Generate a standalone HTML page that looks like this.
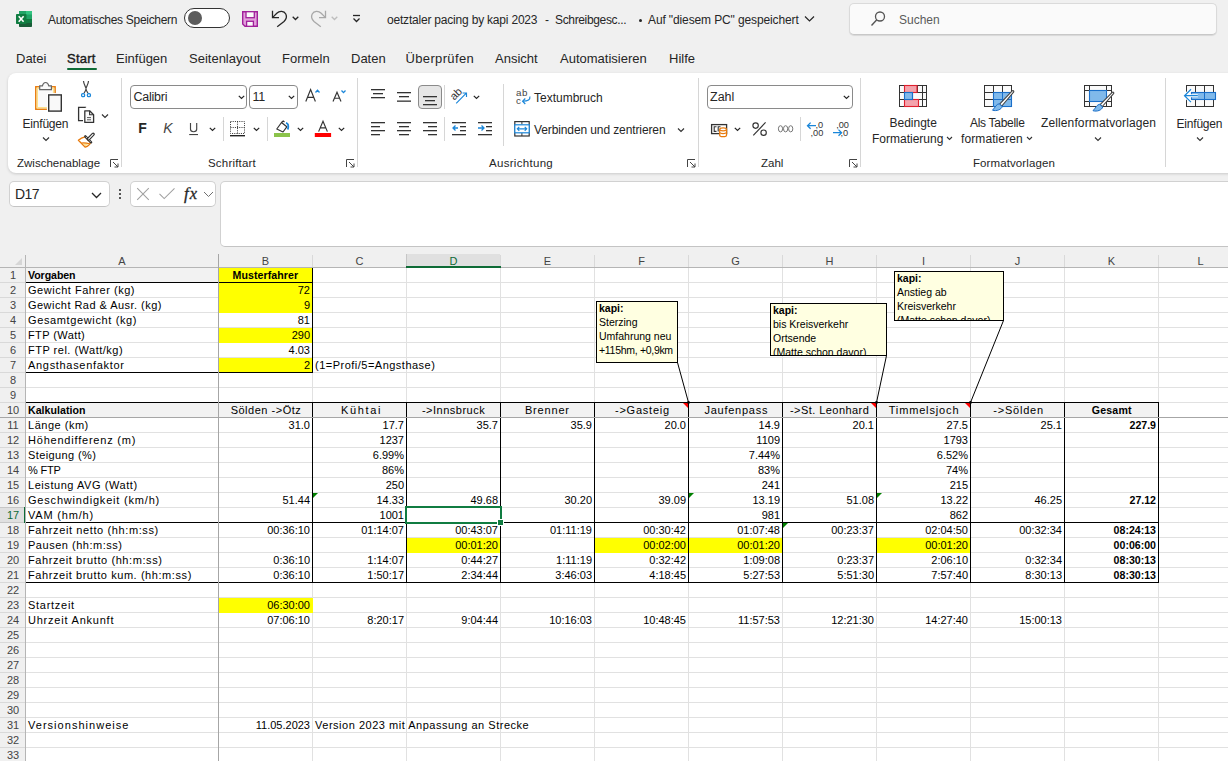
<!DOCTYPE html>
<html><head><meta charset="utf-8"><style>
html,body{margin:0;padding:0;width:1228px;height:761px;overflow:hidden;background:#f0f0f0}
body{position:relative;font-family:"Liberation Sans",sans-serif}
.r{position:absolute;box-sizing:border-box}
svg.r{box-sizing:content-box;overflow:visible}
.t{position:absolute;white-space:nowrap;line-height:1.117;font-family:"Liberation Sans",sans-serif}
.cm{background:#ffffe1;border:1px solid #000;overflow:hidden;font-size:10.5px;line-height:14px;padding:0 0 0 2px;color:#000;white-space:nowrap;letter-spacing:0}
.cm b{font-weight:bold}
</style></head><body>
<div class="r" style="left:0px;top:0px;width:1228px;height:761px;background:#f0f0f0;"></div>
<svg class="r" style="left:16px;top:11px;" width="17" height="17" viewBox="0 0 17 17">
<rect x="3" y="0" width="13" height="16" rx="0.8" fill="#185c37"/>
<rect x="3" y="0" width="13" height="12" fill="#107c41"/>
<rect x="3" y="0" width="13" height="8" fill="#21a366"/>
<rect x="10" y="0" width="6" height="3.5" fill="#33c481"/>
<rect x="0" y="3" width="10.5" height="10" rx="0.8" fill="#107c41"/>
<path d="M2.7 5.3 L7.6 10.8 M7.6 5.3 L2.7 10.8" stroke="#fff" stroke-width="1.6"/>
</svg>
<div class="t" style="left:48px;top:14px;font-size:12px;color:#262626;font-weight:normal;letter-spacing:-0.3px;">Automatisches Speichern</div>
<div class="r" style="left:184px;top:8px;width:46px;height:20px;border:1.3px solid #333;border-radius:10px;background:#fff"></div>
<div class="r" style="left:188.2px;top:11.2px;width:13.6px;height:13.6px;border-radius:7px;background:#5c5c5c"></div>
<svg class="r" style="left:242px;top:11px;" width="16" height="16" viewBox="0 0 16 16">
<path d="M0.7 0.7 H15.3 V15.3 H3 L0.7 13 Z" fill="#e2a0dc" stroke="#a0209a" stroke-width="1.4"/>
<rect x="4" y="0.7" width="8.3" height="6" fill="#fafafa" stroke="#a0209a" stroke-width="1.3"/>
<rect x="4.6" y="10.3" width="6.8" height="5" fill="#fafafa" stroke="#a0209a" stroke-width="1.3"/>
</svg>
<svg class="r" style="left:270px;top:9px;" width="20" height="20" viewBox="0 0 20 20">
<path d="M2.5 1.8 V8.6 H9" fill="none" stroke="#262626" stroke-width="1.3"/>
<path d="M2.5 8.6 L6.8 4.3 C9.5 1.6 14 1.8 15.8 5 C17 7.5 16.5 10 14 12.5 L7.2 17.7" fill="none" stroke="#262626" stroke-width="1.3"/>
</svg>
<svg class="r" style="left:292px;top:16px;" width="8" height="5" viewBox="0 0 8 5"><path d="M0.7 0.7 L3.5 3.5 L6.3 0.7" fill="none" stroke="#262626" stroke-width="1.3"/></svg>
<svg class="r" style="left:309px;top:9px;" width="20" height="20" viewBox="0 0 20 20">
<path d="M16.5 1.8 V8.6 H10" fill="none" stroke="#a8a8a8" stroke-width="1.3"/>
<path d="M16.5 8.6 L12.2 4.3 C9.5 1.6 5 1.8 3.2 5 C2 7.5 2.5 10 5 12.5 L11.8 17.7" fill="none" stroke="#a8a8a8" stroke-width="1.3"/>
</svg>
<svg class="r" style="left:331px;top:16px;" width="8" height="5" viewBox="0 0 8 5"><path d="M0.7 0.7 L3.5 3.5 L6.3 0.7" fill="none" stroke="#bdbdbd" stroke-width="1.3"/></svg>
<svg class="r" style="left:352px;top:14px;" width="10" height="10" viewBox="0 0 10 10"><path d="M1 1.5 H8" stroke="#262626" stroke-width="1.3"/><path d="M1.5 4.5 L4.5 7.5 L7.5 4.5" fill="none" stroke="#262626" stroke-width="1.3"/></svg>
<div class="t" style="left:387px;top:14px;font-size:12px;color:#262626;font-weight:normal;letter-spacing:-0.2px;">oetztaler pacing by kapi 2023</div>
<div class="t" style="left:545px;top:14px;font-size:12px;color:#262626;font-weight:normal;letter-spacing:0px;">-</div>
<div class="t" style="left:555px;top:14px;font-size:12px;color:#262626;font-weight:normal;letter-spacing:-0.35px;">Schreibgesc...</div>
<div class="r" style="left:639px;top:19px;width:3px;height:3px;background:#262626;border-radius:2px"></div>
<div class="t" style="left:648px;top:14px;font-size:12px;color:#262626;font-weight:normal;letter-spacing:-0.12px;">Auf "diesem PC" gespeichert</div>
<svg class="r" style="left:804px;top:15px;" width="11" height="8" viewBox="0 0 11 8"><path d="M1 1.5 L5.5 6 L10 1.5" fill="none" stroke="#262626" stroke-width="1.2"/></svg>
<div class="r" style="left:849px;top:3px;width:368px;height:32px;border:1px solid #dadada;border-bottom-color:#c8c8c8;border-radius:5px;background:#fafafa;box-shadow:0 1px 1px rgba(0,0,0,0.1)"></div>
<svg class="r" style="left:870px;top:10px;" width="16" height="17" viewBox="0 0 16 17"><circle cx="10" cy="6.5" r="4.5" fill="none" stroke="#555" stroke-width="1.3"/><path d="M6.8 9.8 L1.5 15.5" stroke="#555" stroke-width="1.4"/></svg>
<div class="t" style="left:899px;top:14px;font-size:12px;color:#5a5a5a;font-weight:normal;letter-spacing:0px;">Suchen</div>
<div class="t" style="left:16px;top:52px;font-size:13px;color:#262626;font-weight:normal;letter-spacing:0px;">Datei</div>
<div class="t" style="left:67px;top:52px;font-size:13px;color:#1a1a1a;font-weight:normal;letter-spacing:0.25px;-webkit-text-stroke:0.4px #1a1a1a">Start</div>
<div class="t" style="left:116px;top:52px;font-size:13px;color:#262626;font-weight:normal;letter-spacing:0px;">Einfügen</div>
<div class="t" style="left:189px;top:52px;font-size:13px;color:#262626;font-weight:normal;letter-spacing:0px;">Seitenlayout</div>
<div class="t" style="left:282px;top:52px;font-size:13px;color:#262626;font-weight:normal;letter-spacing:0px;">Formeln</div>
<div class="t" style="left:351px;top:52px;font-size:13px;color:#262626;font-weight:normal;letter-spacing:0px;">Daten</div>
<div class="t" style="left:405.5px;top:52px;font-size:13px;color:#262626;font-weight:normal;letter-spacing:0.35px;">Überprüfen</div>
<div class="t" style="left:495px;top:52px;font-size:13px;color:#262626;font-weight:normal;letter-spacing:0px;">Ansicht</div>
<div class="t" style="left:560px;top:52px;font-size:13px;color:#262626;font-weight:normal;letter-spacing:0px;">Automatisieren</div>
<div class="t" style="left:669px;top:52px;font-size:13px;color:#262626;font-weight:normal;letter-spacing:0px;">Hilfe</div>
<div class="r" style="left:67px;top:68px;width:30px;height:2px;background:#0e6b36;border-radius:1px"></div>
<div class="r" style="left:8px;top:73px;width:1240px;height:100px;background:#fff;border-radius:8px;box-shadow:0 1px 3px rgba(0,0,0,0.16)"></div>
<div class="r" style="left:121px;top:78px;width:1px;height:89px;background:#d6d6d6;"></div>
<div class="r" style="left:357px;top:78px;width:1px;height:89px;background:#d6d6d6;"></div>
<div class="r" style="left:698px;top:78px;width:1px;height:89px;background:#d6d6d6;"></div>
<div class="r" style="left:860px;top:78px;width:1px;height:89px;background:#d6d6d6;"></div>
<div class="r" style="left:1165px;top:78px;width:1px;height:89px;background:#d6d6d6;"></div>
<div class="t" style="left:17px;top:157px;font-size:11.5px;color:#262626;font-weight:normal;letter-spacing:0px;">Zwischenablage</div>
<div class="t" style="left:208px;top:157px;font-size:11.5px;color:#262626;font-weight:normal;letter-spacing:0.2px;">Schriftart</div>
<div class="t" style="left:489px;top:157px;font-size:11.5px;color:#262626;font-weight:normal;letter-spacing:0.3px;">Ausrichtung</div>
<div class="t" style="left:761px;top:157px;font-size:11.5px;color:#262626;font-weight:normal;letter-spacing:0px;">Zahl</div>
<div class="t" style="left:973px;top:157px;font-size:11.5px;color:#262626;font-weight:normal;letter-spacing:0.1px;">Formatvorlagen</div>
<svg class="r" style="left:110px;top:159px;" width="9" height="9" viewBox="0 0 9 9"><path d="M0.5 8 V0.5 H8" fill="none" stroke="#444" stroke-width="1"/><path d="M3 3 L8 8 M4.5 8 H8 V4.5" fill="none" stroke="#444" stroke-width="1"/></svg>
<svg class="r" style="left:346px;top:159px;" width="9" height="9" viewBox="0 0 9 9"><path d="M0.5 8 V0.5 H8" fill="none" stroke="#444" stroke-width="1"/><path d="M3 3 L8 8 M4.5 8 H8 V4.5" fill="none" stroke="#444" stroke-width="1"/></svg>
<svg class="r" style="left:687px;top:159px;" width="9" height="9" viewBox="0 0 9 9"><path d="M0.5 8 V0.5 H8" fill="none" stroke="#444" stroke-width="1"/><path d="M3 3 L8 8 M4.5 8 H8 V4.5" fill="none" stroke="#444" stroke-width="1"/></svg>
<svg class="r" style="left:849px;top:159px;" width="9" height="9" viewBox="0 0 9 9"><path d="M0.5 8 V0.5 H8" fill="none" stroke="#444" stroke-width="1"/><path d="M3 3 L8 8 M4.5 8 H8 V4.5" fill="none" stroke="#444" stroke-width="1"/></svg>
<svg class="r" style="left:34px;top:80px;" width="30" height="33" viewBox="0 0 30 33">
<rect x="1.8" y="6.8" width="19.3" height="22.4" fill="#f9f9f9" stroke="#e8790a" stroke-width="1.5"/>
<rect x="3.3" y="8.3" width="16.3" height="19.4" fill="none" stroke="#fde08a" stroke-width="1.4"/>
<path d="M5.7 9.6 V5.9 H8.4 C8.9 3.6 10 2.5 11.6 2.5 C13.2 2.5 14.3 3.6 14.8 5.9 H17.4 V9.6 Z" fill="#fafafa" stroke="#666" stroke-width="1.2"/>
<rect x="14.7" y="14.9" width="12.6" height="16.2" fill="#f9f9f9" stroke="#fff" stroke-width="3.6"/>
<rect x="14.7" y="14.9" width="12.6" height="16.2" fill="#f9f9f9" stroke="#333" stroke-width="1.4"/>
</svg>
<div class="t" style="left:22.5px;top:118px;font-size:12px;color:#262626;font-weight:normal;letter-spacing:-0.2px;">Einfügen</div>
<svg class="r" style="left:42px;top:136px;" width="8" height="6" viewBox="0 0 8 6"><path d="M1 1.5 L4 4.5 L7 1.5" fill="none" stroke="#333" stroke-width="1.2"/></svg>
<svg class="r" style="left:80px;top:81px;" width="12" height="17" viewBox="0 0 12 17">
<path d="M3.5 0 C3.6 3 5.4 5 6.3 8.2 L4 12.3 M8.5 0 C8.4 3 6.6 5 5.7 8.2 L8 12.3" fill="none" stroke="#444" stroke-width="1.2"/>
<rect x="1.6" y="12.6" width="3" height="3" rx="1.2" fill="#fff" stroke="#1a86d9" stroke-width="1.3"/>
<rect x="7.4" y="12.6" width="3" height="3" rx="1.2" fill="#fff" stroke="#1a86d9" stroke-width="1.3"/>
</svg>
<svg class="r" style="left:77px;top:106px;" width="19" height="18" viewBox="0 0 19 18">
<path d="M8.5 1.6 V1.3 H1.6 V14.6 H6" fill="none" stroke="#333" stroke-width="1.3"/>
<path d="M7.8 4.8 H12.6 L16.6 8.8 V16.4 H7.8 Z" fill="#fafafa" stroke="#333" stroke-width="1.3" stroke-linejoin="round"/>
<path d="M12.6 4.8 V8.8 H16.6" fill="none" stroke="#333" stroke-width="1.1"/>
<path d="M10 11.6 H14 M10 13.8 H14" stroke="#444" stroke-width="0.9"/>
</svg>
<svg class="r" style="left:101px;top:113px;" width="8" height="6" viewBox="0 0 8 6"><path d="M1 1.5 L4 4.5 L7 1.5" fill="none" stroke="#333" stroke-width="1.2"/></svg>
<svg class="r" style="left:77px;top:131px;" width="18" height="18" viewBox="0 0 18 18">
<path d="M1.4 9.2 C3.5 7.2 5.8 6.2 8 5.8 L13.5 11.6 C12.8 13.6 10.8 15.4 8.3 16.2 Z" fill="#fff" stroke="#e8790a" stroke-width="1.3" stroke-linejoin="round"/>
<path d="M5.5 12.3 L11.8 12.6 L8.6 15.3 Z" fill="#fde08a"/>
<path d="M4.5 12 C7 11.8 10 12 12.5 12.8" fill="none" stroke="#e8790a" stroke-width="1.1"/>
<path d="M8.3 5.3 L14.1 11.3" stroke="#333" stroke-width="2.4" stroke-linecap="round"/>
<path d="M8.8 5.8 L13.6 10.8" stroke="#fff" stroke-width="0.7"/>
<path d="M11.5 8 L16.2 3.2" stroke="#333" stroke-width="3.3" stroke-linecap="round"/>
<path d="M11.7 7.8 L16 3.4" stroke="#fff" stroke-width="1.1" stroke-linecap="round"/>
</svg>
<div class="r" style="left:130px;top:85px;width:117px;height:24px;border:1px solid #8a8a8a;border-radius:4px;background:#fff"></div>
<div class="t" style="left:133.5px;top:91px;font-size:12.5px;color:#262626;font-weight:normal;letter-spacing:-0.25px;">Calibri</div>
<svg class="r" style="left:237.7px;top:95.4px;" width="8" height="5" viewBox="0 0 8 5"><path d="M0.8 0.9 L3.5 3.5 L6.2 0.9" fill="none" stroke="#262626" stroke-width="1.25"/></svg>
<div class="r" style="left:249px;top:85px;width:49px;height:24px;border:1px solid #8a8a8a;border-radius:4px;background:#fff"></div>
<div class="t" style="left:252.5px;top:91px;font-size:12.5px;color:#262626;font-weight:normal;letter-spacing:-0.3px;">11</div>
<svg class="r" style="left:288.2px;top:95.4px;" width="8" height="5" viewBox="0 0 8 5"><path d="M0.8 0.9 L3.5 3.5 L6.2 0.9" fill="none" stroke="#262626" stroke-width="1.25"/></svg>
<svg class="r" style="left:300px;top:86px;" width="50" height="18" viewBox="0 0 50 18">
<path d="M5.8 15.5 L10.6 3.6 L15.4 15.5 M7.6 11.3 H13.6" fill="none" stroke="#333" stroke-width="1.15"/>
<path d="M15.5 6.5 L17.5 4.2 L19.5 6.5" fill="none" stroke="#1a86d9" stroke-width="1.3"/>
<path d="M33 15.5 L37 6.2 L41 15.5 M34.5 12.2 H39.5" fill="none" stroke="#333" stroke-width="1.15"/>
<path d="M41.5 4.5 L43.5 6.6 L45.5 4.5" fill="none" stroke="#1a86d9" stroke-width="1.3"/>
</svg>
<div class="t" style="left:138.3px;top:121px;font-size:14px;color:#262626;font-weight:bold;letter-spacing:0px;">F</div>
<div class="t" style="left:163.3px;top:121px;font-size:14px;color:#444;font-weight:normal;letter-spacing:0px;font-style:italic">K</div>
<svg class="r" style="left:188px;top:122px;" width="12" height="14" viewBox="0 0 12 14"><path d="M2.5 1 V7.3 C2.5 10.5 8.7 10.5 8.7 7.3 V1" fill="none" stroke="#444" stroke-width="1.15"/><rect x="1.2" y="12" width="8.8" height="1.1" fill="#444"/></svg>
<svg class="r" style="left:209.2px;top:127.4px;" width="8" height="5" viewBox="0 0 8 5"><path d="M0.8 0.9 L3.5 3.5 L6.2 0.9" fill="none" stroke="#262626" stroke-width="1.25"/></svg>
<div class="r" style="left:223px;top:117px;width:1px;height:24px;background:#d6d6d6;"></div>
<svg class="r" style="left:229px;top:120px;" width="17" height="17" viewBox="0 0 17 17">
<path d="M1.5 1.5 H15.5 V13.5 H1.5 Z M8.5 1.5 V13.5 M1.5 7.5 H15.5" fill="none" stroke="#333" stroke-width="1" stroke-dasharray="1 1.2"/>
<rect x="1" y="15" width="15" height="1.4" fill="#222"/>
</svg>
<svg class="r" style="left:253.2px;top:127.4px;" width="8" height="5" viewBox="0 0 8 5"><path d="M0.8 0.9 L3.5 3.5 L6.2 0.9" fill="none" stroke="#262626" stroke-width="1.25"/></svg>
<div class="r" style="left:267px;top:117px;width:1px;height:24px;background:#d6d6d6;"></div>
<svg class="r" style="left:273px;top:119px;" width="18" height="19" viewBox="0 0 18 19">
<path d="M3.8 10 L8.5 3.5 L13.8 7.8 L10 13 Z" fill="#fff" stroke="#333" stroke-width="1.2" stroke-linejoin="round"/>
<path d="M8.5 3.5 L10.2 2 L11.5 3" fill="none" stroke="#333" stroke-width="1.1"/>
<path d="M13 3.8 C15.5 4.5 15.5 8 14.8 10.5" fill="none" stroke="#1a86d9" stroke-width="1.8"/>
<rect x="1" y="14" width="16" height="4" fill="#8bc34a"/>
</svg>
<svg class="r" style="left:297.2px;top:127.4px;" width="8" height="5" viewBox="0 0 8 5"><path d="M0.8 0.9 L3.5 3.5 L6.2 0.9" fill="none" stroke="#262626" stroke-width="1.25"/></svg>
<svg class="r" style="left:316px;top:119px;" width="17" height="19" viewBox="0 0 17 19">
<path d="M2.6 12.6 L7 2.2 L11.4 12.6 M4.3 8.8 H9.7" fill="none" stroke="#333" stroke-width="1.15"/>
<rect x="-1.2" y="14" width="16.3" height="4" fill="#ff0000"/>
</svg>
<svg class="r" style="left:338.2px;top:127.4px;" width="8" height="5" viewBox="0 0 8 5"><path d="M0.8 0.9 L3.5 3.5 L6.2 0.9" fill="none" stroke="#262626" stroke-width="1.25"/></svg>
<svg class="r" style="left:371px;top:88px;" width="15" height="12" viewBox="0 0 15 12"><rect x="0" y="1" width="14" height="1.3" fill="#333"/><rect x="2" y="5" width="10" height="1.3" fill="#333"/><rect x="0" y="9" width="14" height="1.3" fill="#333"/></svg>
<svg class="r" style="left:397px;top:91px;" width="15" height="12" viewBox="0 0 15 12"><rect x="0" y="1" width="14" height="1.3" fill="#333"/><rect x="2" y="5" width="10" height="1.3" fill="#333"/><rect x="0" y="9.5" width="14" height="1.3" fill="#333"/></svg>
<div class="r" style="left:418px;top:85px;width:24px;height:24px;border:1px solid #8a8a8a;border-radius:4px;background:#e6e6e6"></div>
<svg class="r" style="left:423px;top:95px;" width="15" height="12" viewBox="0 0 15 12"><rect x="0" y="1" width="14" height="1.3" fill="#333"/><rect x="2" y="5" width="10" height="1.3" fill="#333"/><rect x="0" y="9" width="14" height="1.3" fill="#333"/></svg>
<div class="r" style="left:444px;top:85px;width:1px;height:24px;background:#d6d6d6;"></div>
<svg class="r" style="left:445px;top:82px;" width="30" height="26" viewBox="0 0 30 26">
<text x="11" y="15.5" text-anchor="middle" font-family="Liberation Sans" font-size="11" fill="#333" transform="rotate(-45 11 12)">ab</text>
<path d="M11.2 21.3 L21.3 11.2 M17.6 11 H21.5 V14.9" fill="none" stroke="#1a86d9" stroke-width="1.15"/>
</svg>
<svg class="r" style="left:472.5px;top:95.4px;" width="8" height="5" viewBox="0 0 8 5"><path d="M0.8 0.9 L3.5 3.5 L6.2 0.9" fill="none" stroke="#262626" stroke-width="1.25"/></svg>
<svg class="r" style="left:371px;top:121px;" width="15" height="15" viewBox="0 0 15 15"><rect x="0" y="1" width="14" height="1.3" fill="#333"/><rect x="0" y="5" width="9" height="1.3" fill="#333"/><rect x="0" y="9" width="14" height="1.3" fill="#333"/><rect x="0" y="13" width="9" height="1.3" fill="#333"/></svg>
<svg class="r" style="left:397px;top:121px;" width="15" height="15" viewBox="0 0 15 15"><rect x="0" y="1" width="14" height="1.3" fill="#333"/><rect x="2" y="5" width="10" height="1.3" fill="#333"/><rect x="0" y="9" width="14" height="1.3" fill="#333"/><rect x="2" y="13" width="10" height="1.3" fill="#333"/></svg>
<svg class="r" style="left:423px;top:121px;" width="15" height="15" viewBox="0 0 15 15"><rect x="0" y="1" width="14" height="1.3" fill="#333"/><rect x="5" y="5" width="9" height="1.3" fill="#333"/><rect x="0" y="9" width="14" height="1.3" fill="#333"/><rect x="5" y="13" width="9" height="1.3" fill="#333"/></svg>
<div class="r" style="left:444px;top:117px;width:1px;height:24px;background:#d6d6d6;"></div>
<svg class="r" style="left:452px;top:121px;" width="15" height="15" viewBox="0 0 15 15"><rect x="0" y="1" width="14" height="1.3" fill="#333"/><rect x="0" y="13" width="14" height="1.3" fill="#333"/><rect x="8" y="5" width="6" height="1.3" fill="#333"/><rect x="8" y="9" width="6" height="1.3" fill="#333"/><path d="M1 7 H6 M3.5 4.5 L1 7 L3.5 9.5" fill="none" stroke="#1a86d9" stroke-width="1.3"/></svg>
<svg class="r" style="left:478px;top:121px;" width="15" height="15" viewBox="0 0 15 15"><rect x="0" y="1" width="14" height="1.3" fill="#333"/><rect x="0" y="13" width="14" height="1.3" fill="#333"/><rect x="8" y="5" width="6" height="1.3" fill="#333"/><rect x="8" y="9" width="6" height="1.3" fill="#333"/><path d="M0 7 H6 M3.5 4.5 L6 7 L3.5 9.5" fill="none" stroke="#1a86d9" stroke-width="1.3"/></svg>
<div class="r" style="left:503px;top:84px;width:1px;height:62px;background:#d6d6d6;"></div>
<svg class="r" style="left:514px;top:86px;" width="20" height="22" viewBox="0 0 20 22">
<text x="2" y="10.3" font-family="Liberation Sans" font-size="9.8" fill="#444" letter-spacing="0.6">ab</text>
<text x="2" y="17.6" font-family="Liberation Sans" font-size="9.8" fill="#444">c</text>
<path d="M15.8 10.5 C16.5 13.5 14 15.2 9 15.2" fill="none" stroke="#1a86d9" stroke-width="1.2"/>
<path d="M11.3 12.5 L8.6 15.2 L11.3 18" fill="none" stroke="#1a86d9" stroke-width="1.2"/>
</svg>
<div class="t" style="left:534px;top:92px;font-size:12px;color:#262626;font-weight:normal;letter-spacing:0px;">Textumbruch</div>
<svg class="r" style="left:513px;top:120px;" width="17" height="17" viewBox="0 0 17 17">
<rect x="1.8" y="1.6" width="14.4" height="14.4" fill="#fff" stroke="#333" stroke-width="1.2"/>
<path d="M8.9 1.6 V4.5 M8.9 13 V16" stroke="#333" stroke-width="1"/>
<rect x="1.8" y="4.8" width="14.4" height="8" fill="#fff" stroke="#1a86d9" stroke-width="1.2"/>
<path d="M4.3 8.8 H13.7 M6.3 6.8 L4.3 8.8 L6.3 10.8 M11.7 6.8 L13.7 8.8 L11.7 10.8" fill="none" stroke="#1a86d9" stroke-width="1.15"/>
</svg>
<div class="t" style="left:534px;top:124px;font-size:12px;color:#262626;font-weight:normal;letter-spacing:-0.11px;">Verbinden und zentrieren</div>
<svg class="r" style="left:677px;top:127px;" width="8" height="6" viewBox="0 0 8 6"><path d="M1 1.5 L4 4.5 L7 1.5" fill="none" stroke="#333" stroke-width="1.2"/></svg>
<div class="r" style="left:707px;top:85px;width:146px;height:24px;border:1px solid #8a8a8a;border-radius:4px;background:#fff"></div>
<div class="t" style="left:710px;top:91px;font-size:12.5px;color:#262626;font-weight:normal;letter-spacing:0px;">Zahl</div>
<svg class="r" style="left:842.7px;top:95.4px;" width="8" height="5" viewBox="0 0 8 5"><path d="M0.8 0.9 L3.5 3.5 L6.2 0.9" fill="none" stroke="#262626" stroke-width="1.25"/></svg>
<svg class="r" style="left:708px;top:120px;" width="22" height="18" viewBox="0 0 22 18">
<rect x="3.6" y="4.6" width="15" height="9" fill="#fff" stroke="#333" stroke-width="1.3"/>
<path d="M8.5 6.8 H6.2 V11.4 H8.5 M12.5 6.8 H10.2 V11.4" fill="none" stroke="#333" stroke-width="1.1"/>
<path d="M11.7 9.3 V15.2 C11.7 17.2 18.5 17.2 18.5 15.2 V9.3" fill="#fff" stroke="#e8790a" stroke-width="1.25"/>
<ellipse cx="15.1" cy="9.3" rx="3.4" ry="1.5" fill="#fff" stroke="#e8790a" stroke-width="1.25"/>
<path d="M11.7 12.3 C11.7 14 18.5 14 18.5 12.3" fill="none" stroke="#e8790a" stroke-width="1.1"/>
</svg>
<svg class="r" style="left:734.2px;top:127.4px;" width="8" height="5" viewBox="0 0 8 5"><path d="M0.8 0.9 L3.5 3.5 L6.2 0.9" fill="none" stroke="#262626" stroke-width="1.25"/></svg>
<svg class="r" style="left:750px;top:120px;" width="20" height="18" viewBox="0 0 20 18">
<circle cx="5.6" cy="5.6" r="2.7" fill="none" stroke="#333" stroke-width="1.15"/>
<circle cx="13.6" cy="12.7" r="2.7" fill="none" stroke="#333" stroke-width="1.15"/>
<path d="M3.3 15.3 L15.6 2.4" stroke="#333" stroke-width="1.15"/>
</svg>
<svg class="r" style="left:776px;top:122px;" width="20" height="12" viewBox="0 0 20 12">
<ellipse cx="4.5" cy="6.8" rx="2.1" ry="3.1" fill="none" stroke="#777" stroke-width="1"/>
<ellipse cx="9.6" cy="6.8" rx="2.1" ry="3.1" fill="none" stroke="#777" stroke-width="1"/>
<ellipse cx="14.7" cy="6.8" rx="2.1" ry="3.1" fill="none" stroke="#777" stroke-width="1"/>
</svg>
<div class="r" style="left:800px;top:117px;width:1px;height:24px;background:#d6d6d6;"></div>
<svg class="r" style="left:805px;top:119px;" width="20" height="19" viewBox="0 0 20 19">
<path d="M2.5 6.7 H11 M5.6 3.6 L2.5 6.7 L5.6 9.8" fill="none" stroke="#1a86d9" stroke-width="1.3"/>
<text x="10.5" y="9" font-family="Liberation Sans" font-size="9.2" fill="#333">,0</text>
<text x="5.5" y="16.8" font-family="Liberation Sans" font-size="9.2" fill="#333">,00</text>
</svg>
<svg class="r" style="left:831px;top:119px;" width="20" height="19" viewBox="0 0 20 19">
<text x="5.2" y="9" font-family="Liberation Sans" font-size="9.2" fill="#333">,00</text>
<path d="M2 13.7 H10.6 M7.5 10.6 L10.6 13.7 L7.5 16.8" fill="none" stroke="#1a86d9" stroke-width="1.3"/>
<text x="9.5" y="16.8" font-family="Liberation Sans" font-size="9.2" fill="#333">,0</text>
</svg>
<svg class="r" style="left:898px;top:84px;" width="30" height="24" viewBox="0 0 30 24">
<rect x="1.5" y="1.5" width="27" height="21" fill="#fafafa" stroke="#333" stroke-width="1"/>
<path d="M1.5 8.5 H28.5 M1.5 15.5 H28.5 M6.5 1.5 V22.5 M19.5 1.5 V8.5 M19.5 15.5 V22.5 M24.5 1.5 V22.5" stroke="#333" stroke-width="1" fill="none"/>
<rect x="6.5" y="1.5" width="12.5" height="7" fill="#f4a3ac" stroke="#e0202e" stroke-width="1.1"/>
<rect x="6.5" y="15.5" width="14" height="7" fill="#f4a3ac" stroke="#e0202e" stroke-width="1.1"/>
<rect x="6.5" y="8.5" width="8" height="7" fill="#80b9ea" stroke="#1a6fc9" stroke-width="1.1"/>
<path d="M14.5 9 V15" stroke="#1a6fc9" stroke-width="1.1"/>
</svg>
<div class="t" style="left:889.5px;top:117px;font-size:12px;color:#262626;font-weight:normal;letter-spacing:0px;">Bedingte</div>
<div class="t" style="left:872px;top:133px;font-size:12px;color:#262626;font-weight:normal;letter-spacing:0px;">Formatierung</div>
<svg class="r" style="left:946px;top:136px;" width="7" height="5" viewBox="0 0 7 5"><path d="M1 1 L3.5 3.5 L6 1" fill="none" stroke="#333" stroke-width="1.1"/></svg>
<svg class="r" style="left:983px;top:84px;" width="32" height="30" viewBox="0 0 32 30">
<rect x="1.5" y="1.5" width="27" height="21" fill="#fafafa" stroke="#333" stroke-width="1"/>
<path d="M1.5 8.5 H28.5 M1.5 15.5 H10.5 M10.5 1.5 V22.5 M19.5 1.5 V8.5" stroke="#333" stroke-width="1" fill="none"/>
<rect x="10.5" y="8.5" width="18" height="14" fill="#80b9ea" stroke="#1a6fc9" stroke-width="1.1"/>
<path d="M10.5 15.5 H28.5 M19.5 8.5 V22.5" stroke="#1a6fc9" stroke-width="1"/>
<path d="M29.2 6.8 C30.5 6.2 31.2 7.2 30.6 8.2 L18.8 22 L16.6 20.2 Z" fill="#fff" stroke="#444" stroke-width="1.1" stroke-linejoin="round"/>
<path d="M16.2 19.8 C13.5 20 12.5 23 9.5 26.2 C13.5 27.5 18.5 25.5 19.2 22.5 Z" fill="#80b9ea" stroke="#1a6fc9" stroke-width="1"/>
</svg>
<div class="t" style="left:970px;top:117px;font-size:12px;color:#262626;font-weight:normal;letter-spacing:-0.3px;">Als Tabelle</div>
<div class="t" style="left:961px;top:133px;font-size:12px;color:#262626;font-weight:normal;letter-spacing:0.1px;">formatieren</div>
<svg class="r" style="left:1026px;top:136px;" width="7" height="5" viewBox="0 0 7 5"><path d="M1 1 L3.5 3.5 L6 1" fill="none" stroke="#333" stroke-width="1.1"/></svg>
<svg class="r" style="left:1083px;top:84px;" width="32" height="30" viewBox="0 0 32 30">
<rect x="1.5" y="1.5" width="27" height="21" fill="#fafafa" stroke="#333" stroke-width="1"/>
<path d="M1.5 6.5 H28.5 M1.5 17.5 H28.5 M6.5 1.5 V22.5 M23.5 1.5 V22.5" stroke="#333" stroke-width="1" fill="none"/>
<rect x="6.5" y="6.5" width="17" height="11" fill="#80b9ea" stroke="#1a6fc9" stroke-width="1.1"/>
<path d="M29.2 8.3 C30.5 7.7 31.2 8.7 30.6 9.7 L19.3 22.5 L17.1 20.7 Z" fill="#fff" stroke="#444" stroke-width="1.1" stroke-linejoin="round"/>
<path d="M16.7 20.3 C14 20.5 13 23.5 10 26.7 C14 28 19 26 19.7 23 Z" fill="#80b9ea" stroke="#1a6fc9" stroke-width="1"/>
</svg>
<div class="t" style="left:1041px;top:117px;font-size:12px;color:#262626;font-weight:normal;letter-spacing:0.12px;">Zellenformatvorlagen</div>
<svg class="r" style="left:1094px;top:136px;" width="8" height="6" viewBox="0 0 8 6"><path d="M1 1.5 L4 4.5 L7 1.5" fill="none" stroke="#333" stroke-width="1.1"/></svg>
<svg class="r" style="left:1182px;top:84px;" width="36" height="24" viewBox="0 0 36 24">
<rect x="4.5" y="1.5" width="27" height="21" fill="#fafafa" stroke="#333" stroke-width="1"/>
<path d="M13.5 1.5 V22.5 M22.5 1.5 V22.5" stroke="#333" stroke-width="1" fill="none"/>
<rect x="9.5" y="8.5" width="24" height="7" fill="#80b9ea" stroke="#1a6fc9" stroke-width="1.1"/>
<path d="M22.5 8.5 V15.5" stroke="#1a6fc9" stroke-width="1"/>
<path d="M15.8 11.7 H3 M9 5.3 L2.5 11.7 L9 18.1" fill="none" stroke="#fff" stroke-width="3"/>
<path d="M15.8 11.7 H3 M9 5.3 L2.5 11.7 L9 18.1" fill="none" stroke="#1a86d9" stroke-width="1.2"/>
</svg>
<div class="t" style="left:1176.5px;top:118px;font-size:12px;color:#262626;font-weight:normal;letter-spacing:-0.2px;">Einfügen</div>
<svg class="r" style="left:1196px;top:136px;" width="8" height="6" viewBox="0 0 8 6"><path d="M1 1.5 L4 4.5 L7 1.5" fill="none" stroke="#333" stroke-width="1.1"/></svg>
<div class="r" style="left:9px;top:181px;width:101px;height:26px;border:1px solid #d1d1d1;border-bottom-color:#c4c4c4;border-radius:5px;background:#fff"></div>
<div class="t" style="left:15px;top:187px;font-size:14px;color:#262626;font-weight:normal;letter-spacing:-0.6px;">D17</div>
<svg class="r" style="left:91px;top:192px;" width="12" height="7" viewBox="0 0 12 7"><path d="M1 1 L5.5 5.5 L10 1" fill="none" stroke="#262626" stroke-width="1.3"/></svg>
<div class="r" style="left:119.2px;top:188.8px;width:2.2px;height:2.2px;background:#222;border-radius:1px"></div>
<div class="r" style="left:119.2px;top:192.8px;width:2.2px;height:2.2px;background:#222;border-radius:1px"></div>
<div class="r" style="left:119.2px;top:196.8px;width:2.2px;height:2.2px;background:#222;border-radius:1px"></div>
<div class="r" style="left:130px;top:181px;width:86px;height:26px;border:1px solid #d1d1d1;border-bottom-color:#c4c4c4;border-radius:5px;background:#fff"></div>
<svg class="r" style="left:136px;top:187px;" width="14" height="14" viewBox="0 0 14 14"><path d="M1.2 1.2 L12.8 12.8 M12.8 1.2 L1.2 12.8" stroke="#a0a0a0" stroke-width="1.05"/></svg>
<svg class="r" style="left:158px;top:187px;" width="18" height="13" viewBox="0 0 18 13"><path d="M1.5 6.8 L6.2 11.6 L16.5 1.3" fill="none" stroke="#a0a0a0" stroke-width="1.05"/></svg>
<div class="t" style="left:184px;top:184px;font-size:17px;color:#262626;font-weight:normal;letter-spacing:0px;font-family:'Liberation Serif',serif;font-style:italic;-webkit-text-stroke:0.3px #262626">f<span style="font-size:16.5px;letter-spacing:0;margin-left:1px">x</span></div>
<svg class="r" style="left:203px;top:191px;" width="11" height="7" viewBox="0 0 11 7"><path d="M1 1 L5.5 5.5 L10 1" fill="none" stroke="#707070" stroke-width="1"/></svg>
<div class="r" style="left:220px;top:181px;width:1030px;height:66px;border:1px solid #d1d1d1;border-bottom-color:#c4c4c4;border-radius:5px;background:#fff"></div>
<div class="r" style="left:26px;top:268px;width:1202px;height:493px;background:#ffffff;"></div>
<svg class="r" style="left:0;top:0" width="1228" height="761"><rect x="26" y="282" width="1202" height="1" fill="#e1e1e1"/><rect x="0" y="282" width="25" height="1" fill="#d9d9d9"/><rect x="26" y="297" width="1202" height="1" fill="#e1e1e1"/><rect x="0" y="297" width="25" height="1" fill="#d9d9d9"/><rect x="26" y="312" width="1202" height="1" fill="#e1e1e1"/><rect x="0" y="312" width="25" height="1" fill="#d9d9d9"/><rect x="26" y="327" width="1202" height="1" fill="#e1e1e1"/><rect x="0" y="327" width="25" height="1" fill="#d9d9d9"/><rect x="26" y="342" width="1202" height="1" fill="#e1e1e1"/><rect x="0" y="342" width="25" height="1" fill="#d9d9d9"/><rect x="26" y="357" width="1202" height="1" fill="#e1e1e1"/><rect x="0" y="357" width="25" height="1" fill="#d9d9d9"/><rect x="26" y="372" width="1202" height="1" fill="#e1e1e1"/><rect x="0" y="372" width="25" height="1" fill="#d9d9d9"/><rect x="26" y="387" width="1202" height="1" fill="#e1e1e1"/><rect x="0" y="387" width="25" height="1" fill="#d9d9d9"/><rect x="26" y="402" width="1202" height="1" fill="#e1e1e1"/><rect x="0" y="402" width="25" height="1" fill="#d9d9d9"/><rect x="26" y="417" width="1202" height="1" fill="#e1e1e1"/><rect x="0" y="417" width="25" height="1" fill="#d9d9d9"/><rect x="26" y="432" width="1202" height="1" fill="#e1e1e1"/><rect x="0" y="432" width="25" height="1" fill="#d9d9d9"/><rect x="26" y="447" width="1202" height="1" fill="#e1e1e1"/><rect x="0" y="447" width="25" height="1" fill="#d9d9d9"/><rect x="26" y="462" width="1202" height="1" fill="#e1e1e1"/><rect x="0" y="462" width="25" height="1" fill="#d9d9d9"/><rect x="26" y="477" width="1202" height="1" fill="#e1e1e1"/><rect x="0" y="477" width="25" height="1" fill="#d9d9d9"/><rect x="26" y="492" width="1202" height="1" fill="#e1e1e1"/><rect x="0" y="492" width="25" height="1" fill="#d9d9d9"/><rect x="26" y="507" width="1202" height="1" fill="#e1e1e1"/><rect x="0" y="507" width="25" height="1" fill="#d9d9d9"/><rect x="26" y="522" width="1202" height="1" fill="#e1e1e1"/><rect x="0" y="522" width="25" height="1" fill="#d9d9d9"/><rect x="26" y="537" width="1202" height="1" fill="#e1e1e1"/><rect x="0" y="537" width="25" height="1" fill="#d9d9d9"/><rect x="26" y="552" width="1202" height="1" fill="#e1e1e1"/><rect x="0" y="552" width="25" height="1" fill="#d9d9d9"/><rect x="26" y="567" width="1202" height="1" fill="#e1e1e1"/><rect x="0" y="567" width="25" height="1" fill="#d9d9d9"/><rect x="26" y="582" width="1202" height="1" fill="#e1e1e1"/><rect x="0" y="582" width="25" height="1" fill="#d9d9d9"/><rect x="26" y="597" width="1202" height="1" fill="#e1e1e1"/><rect x="0" y="597" width="25" height="1" fill="#d9d9d9"/><rect x="26" y="612" width="1202" height="1" fill="#e1e1e1"/><rect x="0" y="612" width="25" height="1" fill="#d9d9d9"/><rect x="26" y="627" width="1202" height="1" fill="#e1e1e1"/><rect x="0" y="627" width="25" height="1" fill="#d9d9d9"/><rect x="26" y="642" width="1202" height="1" fill="#e1e1e1"/><rect x="0" y="642" width="25" height="1" fill="#d9d9d9"/><rect x="26" y="657" width="1202" height="1" fill="#e1e1e1"/><rect x="0" y="657" width="25" height="1" fill="#d9d9d9"/><rect x="26" y="672" width="1202" height="1" fill="#e1e1e1"/><rect x="0" y="672" width="25" height="1" fill="#d9d9d9"/><rect x="26" y="687" width="1202" height="1" fill="#e1e1e1"/><rect x="0" y="687" width="25" height="1" fill="#d9d9d9"/><rect x="26" y="702" width="1202" height="1" fill="#e1e1e1"/><rect x="0" y="702" width="25" height="1" fill="#d9d9d9"/><rect x="26" y="717" width="1202" height="1" fill="#e1e1e1"/><rect x="0" y="717" width="25" height="1" fill="#d9d9d9"/><rect x="26" y="732" width="1202" height="1" fill="#e1e1e1"/><rect x="0" y="732" width="25" height="1" fill="#d9d9d9"/><rect x="26" y="747" width="1202" height="1" fill="#e1e1e1"/><rect x="0" y="747" width="25" height="1" fill="#d9d9d9"/><rect x="26" y="762" width="1202" height="1" fill="#e1e1e1"/><rect x="0" y="762" width="25" height="1" fill="#d9d9d9"/><rect x="218" y="268" width="1" height="493" fill="#e1e1e1"/><rect x="218" y="255" width="1" height="12" fill="#d9d9d9"/><rect x="312" y="268" width="1" height="493" fill="#e1e1e1"/><rect x="312" y="255" width="1" height="12" fill="#d9d9d9"/><rect x="406" y="268" width="1" height="493" fill="#e1e1e1"/><rect x="406" y="255" width="1" height="12" fill="#d9d9d9"/><rect x="500" y="268" width="1" height="493" fill="#e1e1e1"/><rect x="500" y="255" width="1" height="12" fill="#d9d9d9"/><rect x="594" y="268" width="1" height="493" fill="#e1e1e1"/><rect x="594" y="255" width="1" height="12" fill="#d9d9d9"/><rect x="688" y="268" width="1" height="493" fill="#e1e1e1"/><rect x="688" y="255" width="1" height="12" fill="#d9d9d9"/><rect x="782" y="268" width="1" height="493" fill="#e1e1e1"/><rect x="782" y="255" width="1" height="12" fill="#d9d9d9"/><rect x="876" y="268" width="1" height="493" fill="#e1e1e1"/><rect x="876" y="255" width="1" height="12" fill="#d9d9d9"/><rect x="970" y="268" width="1" height="493" fill="#e1e1e1"/><rect x="970" y="255" width="1" height="12" fill="#d9d9d9"/><rect x="1064" y="268" width="1" height="493" fill="#e1e1e1"/><rect x="1064" y="255" width="1" height="12" fill="#d9d9d9"/><rect x="1158" y="268" width="1" height="493" fill="#e1e1e1"/><rect x="1158" y="255" width="1" height="12" fill="#d9d9d9"/><rect x="1252" y="268" width="1" height="493" fill="#e1e1e1"/><rect x="1252" y="255" width="1" height="12" fill="#d9d9d9"/></svg>
<div class="r" style="left:26px;top:268px;width:193px;height:15px;background:#f2f2f2;"></div>
<div class="r" style="left:219px;top:268px;width:94px;height:45px;background:#ffff00;"></div>
<div class="r" style="left:219px;top:328px;width:94px;height:15px;background:#ffff00;"></div>
<div class="r" style="left:219px;top:358px;width:94px;height:15px;background:#ffff00;"></div>
<div class="r" style="left:26px;top:403px;width:193px;height:15px;background:#f2f2f2;"></div>
<div class="r" style="left:219px;top:403px;width:94px;height:15px;background:#f2f2f2;"></div>
<div class="r" style="left:313px;top:403px;width:94px;height:15px;background:#f2f2f2;"></div>
<div class="r" style="left:407px;top:403px;width:94px;height:15px;background:#f2f2f2;"></div>
<div class="r" style="left:501px;top:403px;width:94px;height:15px;background:#f2f2f2;"></div>
<div class="r" style="left:595px;top:403px;width:94px;height:15px;background:#f2f2f2;"></div>
<div class="r" style="left:689px;top:403px;width:94px;height:15px;background:#f2f2f2;"></div>
<div class="r" style="left:783px;top:403px;width:94px;height:15px;background:#f2f2f2;"></div>
<div class="r" style="left:877px;top:403px;width:94px;height:15px;background:#f2f2f2;"></div>
<div class="r" style="left:971px;top:403px;width:94px;height:15px;background:#f2f2f2;"></div>
<div class="r" style="left:1065px;top:403px;width:94px;height:15px;background:#f2f2f2;"></div>
<div class="r" style="left:407px;top:538px;width:94px;height:15px;background:#ffff00;"></div>
<div class="r" style="left:595px;top:538px;width:94px;height:15px;background:#ffff00;"></div>
<div class="r" style="left:689px;top:538px;width:94px;height:15px;background:#ffff00;"></div>
<div class="r" style="left:877px;top:538px;width:94px;height:15px;background:#ffff00;"></div>
<div class="r" style="left:219px;top:598px;width:94px;height:15px;background:#ffff00;"></div>
<div class="t" style="left:102.0px;width:40px;text-align:center;top:255px;font-size:11px;color:#444">A</div>
<div class="t" style="left:245.5px;width:40px;text-align:center;top:255px;font-size:11px;color:#444">B</div>
<div class="t" style="left:339.5px;width:40px;text-align:center;top:255px;font-size:11px;color:#444">C</div>
<div class="r" style="left:406px;top:254px;width:94px;height:12px;background:#e0e0e0;"></div>
<div class="r" style="left:406px;top:254px;width:1px;height:12px;background:#c6c6c6;"></div>
<div class="t" style="left:433.5px;width:40px;text-align:center;top:255px;font-size:11px;color:#0e6b36">D</div>
<div class="t" style="left:527.5px;width:40px;text-align:center;top:255px;font-size:11px;color:#444">E</div>
<div class="t" style="left:621.5px;width:40px;text-align:center;top:255px;font-size:11px;color:#444">F</div>
<div class="t" style="left:715.5px;width:40px;text-align:center;top:255px;font-size:11px;color:#444">G</div>
<div class="t" style="left:809.5px;width:40px;text-align:center;top:255px;font-size:11px;color:#444">H</div>
<div class="t" style="left:903.5px;width:40px;text-align:center;top:255px;font-size:11px;color:#444">I</div>
<div class="t" style="left:997.5px;width:40px;text-align:center;top:255px;font-size:11px;color:#444">J</div>
<div class="t" style="left:1091.5px;width:40px;text-align:center;top:255px;font-size:11px;color:#444">K</div>
<div class="t" style="left:1180.5px;width:40px;text-align:center;top:255px;font-size:11px;color:#444">L</div>
<div class="r" style="left:0px;top:267px;width:1228px;height:1px;background:#b5b5b5;"></div>
<div class="r" style="left:406px;top:266px;width:95px;height:2px;background:#0e6b36;"></div>
<div class="t" style="left:0;width:26px;text-align:center;top:269px;font-size:11px;color:#444">1</div>
<div class="t" style="left:0;width:26px;text-align:center;top:284px;font-size:11px;color:#444">2</div>
<div class="t" style="left:0;width:26px;text-align:center;top:299px;font-size:11px;color:#444">3</div>
<div class="t" style="left:0;width:26px;text-align:center;top:314px;font-size:11px;color:#444">4</div>
<div class="t" style="left:0;width:26px;text-align:center;top:329px;font-size:11px;color:#444">5</div>
<div class="t" style="left:0;width:26px;text-align:center;top:344px;font-size:11px;color:#444">6</div>
<div class="t" style="left:0;width:26px;text-align:center;top:359px;font-size:11px;color:#444">7</div>
<div class="t" style="left:0;width:26px;text-align:center;top:374px;font-size:11px;color:#444">8</div>
<div class="t" style="left:0;width:26px;text-align:center;top:389px;font-size:11px;color:#444">9</div>
<div class="t" style="left:0;width:26px;text-align:center;top:404px;font-size:11px;color:#444">10</div>
<div class="t" style="left:0;width:26px;text-align:center;top:419px;font-size:11px;color:#444">11</div>
<div class="t" style="left:0;width:26px;text-align:center;top:434px;font-size:11px;color:#444">12</div>
<div class="t" style="left:0;width:26px;text-align:center;top:449px;font-size:11px;color:#444">13</div>
<div class="t" style="left:0;width:26px;text-align:center;top:464px;font-size:11px;color:#444">14</div>
<div class="t" style="left:0;width:26px;text-align:center;top:479px;font-size:11px;color:#444">15</div>
<div class="t" style="left:0;width:26px;text-align:center;top:494px;font-size:11px;color:#444">16</div>
<div class="r" style="left:0px;top:507px;width:24px;height:16px;background:#e0e0e0;"></div>
<div class="r" style="left:0px;top:507px;width:24px;height:1px;background:#c6c6c6;"></div>
<div class="r" style="left:0px;top:522px;width:24px;height:1px;background:#c6c6c6;"></div>
<div class="r" style="left:24px;top:507px;width:2px;height:16px;background:#0e6b36;"></div>
<div class="t" style="left:0;width:26px;text-align:center;top:509px;font-size:11px;color:#0e6b36">17</div>
<div class="t" style="left:0;width:26px;text-align:center;top:524px;font-size:11px;color:#444">18</div>
<div class="t" style="left:0;width:26px;text-align:center;top:539px;font-size:11px;color:#444">19</div>
<div class="t" style="left:0;width:26px;text-align:center;top:554px;font-size:11px;color:#444">20</div>
<div class="t" style="left:0;width:26px;text-align:center;top:569px;font-size:11px;color:#444">21</div>
<div class="t" style="left:0;width:26px;text-align:center;top:584px;font-size:11px;color:#444">22</div>
<div class="t" style="left:0;width:26px;text-align:center;top:599px;font-size:11px;color:#444">23</div>
<div class="t" style="left:0;width:26px;text-align:center;top:614px;font-size:11px;color:#444">24</div>
<div class="t" style="left:0;width:26px;text-align:center;top:629px;font-size:11px;color:#444">25</div>
<div class="t" style="left:0;width:26px;text-align:center;top:644px;font-size:11px;color:#444">26</div>
<div class="t" style="left:0;width:26px;text-align:center;top:659px;font-size:11px;color:#444">27</div>
<div class="t" style="left:0;width:26px;text-align:center;top:674px;font-size:11px;color:#444">28</div>
<div class="t" style="left:0;width:26px;text-align:center;top:689px;font-size:11px;color:#444">29</div>
<div class="t" style="left:0;width:26px;text-align:center;top:704px;font-size:11px;color:#444">30</div>
<div class="t" style="left:0;width:26px;text-align:center;top:719px;font-size:11px;color:#444">31</div>
<div class="t" style="left:0;width:26px;text-align:center;top:734px;font-size:11px;color:#444">32</div>
<div class="t" style="left:0;width:26px;text-align:center;top:749px;font-size:11px;color:#444">33</div>
<div class="r" style="left:25px;top:255px;width:1px;height:506px;background:#b5b5b5;"></div>
<svg class="r" style="left:15px;top:258px;" width="8" height="7" viewBox="0 0 8 7"><path d="M7 0 V7 H0 Z" fill="#d6d6d6"/></svg>
<div class="t" style="left:28px;top:270.01px;font-size:10.6px;font-weight:bold;letter-spacing:-0.071px;color:#000">Vorgaben</div>
<div class="t" style="left:118.34px;width:294px;text-align:center;top:270.01px;font-size:10.6px;font-weight:bold;letter-spacing:0.074px;color:#000">Musterfahrer</div>
<div class="t" style="left:28px;top:284.05px;font-size:11px;font-weight:normal;letter-spacing:0.517px;color:#000">Gewicht Fahrer (kg)</div>
<div class="t" style="left:28px;top:299.05px;font-size:11px;font-weight:normal;letter-spacing:0.457px;color:#000">Gewicht Rad &amp; Ausr. (kg)</div>
<div class="t" style="left:28px;top:314.05px;font-size:11px;font-weight:normal;letter-spacing:0.630px;color:#000">Gesamtgewicht (kg)</div>
<div class="t" style="left:28px;top:329.05px;font-size:11px;font-weight:normal;letter-spacing:0.399px;color:#000">FTP (Watt)</div>
<div class="t" style="left:28px;top:344.05px;font-size:11px;font-weight:normal;letter-spacing:0.494px;color:#000">FTP rel. (Watt/kg)</div>
<div class="t" style="left:28px;top:359.05px;font-size:11px;font-weight:normal;letter-spacing:0.686px;color:#000">Angsthasenfaktor</div>
<div class="t" style="left:28px;top:419.05px;font-size:11px;font-weight:normal;letter-spacing:0.511px;color:#000">Länge (km)</div>
<div class="t" style="left:28px;top:434.05px;font-size:11px;font-weight:normal;letter-spacing:0.788px;color:#000">Höhendifferenz (m)</div>
<div class="t" style="left:28px;top:449.05px;font-size:11px;font-weight:normal;letter-spacing:0.391px;color:#000">Steigung (%)</div>
<div class="t" style="left:28px;top:464.05px;font-size:11px;font-weight:normal;letter-spacing:-0.175px;color:#000">% FTP</div>
<div class="t" style="left:28px;top:479.05px;font-size:11px;font-weight:normal;letter-spacing:0.556px;color:#000">Leistung AVG (Watt)</div>
<div class="t" style="left:28px;top:494.05px;font-size:11px;font-weight:normal;letter-spacing:0.806px;color:#000">Geschwindigkeit (km/h)</div>
<div class="t" style="left:28px;top:509.05px;font-size:11px;font-weight:normal;letter-spacing:0.811px;color:#000">VAM (hm/h)</div>
<div class="t" style="left:28px;top:524.04px;font-size:11px;font-weight:normal;letter-spacing:0.613px;color:#000">Fahrzeit netto (hh:m:ss)</div>
<div class="t" style="left:28px;top:539.04px;font-size:11px;font-weight:normal;letter-spacing:0.521px;color:#000">Pausen (hh:m:ss)</div>
<div class="t" style="left:28px;top:554.04px;font-size:11px;font-weight:normal;letter-spacing:0.588px;color:#000">Fahrzeit brutto (hh:m:ss)</div>
<div class="t" style="left:28px;top:569.04px;font-size:11px;font-weight:normal;letter-spacing:0.572px;color:#000">Fahrzeit brutto kum. (hh:m:ss)</div>
<div class="t" style="left:28px;top:599.04px;font-size:11px;font-weight:normal;letter-spacing:0.725px;color:#000">Startzeit</div>
<div class="t" style="left:28px;top:614.04px;font-size:11px;font-weight:normal;letter-spacing:0.779px;color:#000">Uhrzeit Ankunft</div>
<div class="t" style="left:28px;top:719.04px;font-size:11px;font-weight:normal;letter-spacing:1.027px;color:#000">Versionshinweise</div>
<div class="t" style="right:918px;top:284.05px;font-size:11px;font-weight:normal;letter-spacing:0.000px;color:#000">72</div>
<div class="t" style="right:918px;top:299.05px;font-size:11px;font-weight:normal;letter-spacing:0.000px;color:#000">9</div>
<div class="t" style="right:918px;top:314.05px;font-size:11px;font-weight:normal;letter-spacing:0.000px;color:#000">81</div>
<div class="t" style="right:918px;top:329.05px;font-size:11px;font-weight:normal;letter-spacing:0.000px;color:#000">290</div>
<div class="t" style="right:918px;top:344.05px;font-size:11px;font-weight:normal;letter-spacing:0.000px;color:#000">4.03</div>
<div class="t" style="right:918px;top:359.05px;font-size:11px;font-weight:normal;letter-spacing:0.000px;color:#000">2</div>
<div class="t" style="left:315px;top:359.05px;font-size:11px;font-weight:normal;letter-spacing:0.490px;color:#000">(1=Profi/5=Angsthase)</div>
<div class="t" style="left:28px;top:405.01px;font-size:10.6px;font-weight:bold;letter-spacing:0.040px;color:#000">Kalkulation</div>
<div class="t" style="left:119.01px;width:294px;text-align:center;top:404.05px;font-size:11px;font-weight:normal;letter-spacing:0.519px;color:#000">Sölden -&gt;Ötz</div>
<div class="t" style="left:214.62px;width:294px;text-align:center;top:404.05px;font-size:11px;font-weight:normal;letter-spacing:1.640px;color:#000">Kühtai</div>
<div class="t" style="left:306.6px;width:294px;text-align:center;top:404.05px;font-size:11px;font-weight:normal;letter-spacing:0.500px;color:#000">-&gt;Innsbruck</div>
<div class="t" style="left:400.4px;width:294px;text-align:center;top:404.05px;font-size:11px;font-weight:normal;letter-spacing:0.817px;color:#000">Brenner</div>
<div class="t" style="left:495.45px;width:294px;text-align:center;top:404.05px;font-size:11px;font-weight:normal;letter-spacing:0.775px;color:#000">-&gt;Gasteig</div>
<div class="t" style="left:589.32px;width:294px;text-align:center;top:404.05px;font-size:11px;font-weight:normal;letter-spacing:0.744px;color:#000">Jaufenpass</div>
<div class="t" style="left:682.62px;width:294px;text-align:center;top:404.05px;font-size:11px;font-weight:normal;letter-spacing:0.446px;color:#000">-&gt;St. Leonhard</div>
<div class="t" style="left:777.02px;width:294px;text-align:center;top:404.05px;font-size:11px;font-weight:normal;letter-spacing:0.850px;color:#000">Timmelsjoch</div>
<div class="t" style="left:871.59px;width:294px;text-align:center;top:404.05px;font-size:11px;font-weight:normal;letter-spacing:0.771px;color:#000">-&gt;Sölden</div>
<div class="t" style="left:964.8px;width:294px;text-align:center;top:405.01px;font-size:10.6px;font-weight:bold;letter-spacing:0.200px;color:#000">Gesamt</div>
<div class="t" style="right:918px;top:419.05px;font-size:11px;font-weight:normal;letter-spacing:0.000px;color:#000">31.0</div>
<div class="t" style="right:824px;top:419.05px;font-size:11px;font-weight:normal;letter-spacing:0.000px;color:#000">17.7</div>
<div class="t" style="right:730px;top:419.05px;font-size:11px;font-weight:normal;letter-spacing:0.000px;color:#000">35.7</div>
<div class="t" style="right:636px;top:419.05px;font-size:11px;font-weight:normal;letter-spacing:0.000px;color:#000">35.9</div>
<div class="t" style="right:542px;top:419.05px;font-size:11px;font-weight:normal;letter-spacing:0.000px;color:#000">20.0</div>
<div class="t" style="right:448px;top:419.05px;font-size:11px;font-weight:normal;letter-spacing:0.000px;color:#000">14.9</div>
<div class="t" style="right:354px;top:419.05px;font-size:11px;font-weight:normal;letter-spacing:0.000px;color:#000">20.1</div>
<div class="t" style="right:260px;top:419.05px;font-size:11px;font-weight:normal;letter-spacing:0.000px;color:#000">27.5</div>
<div class="t" style="right:166px;top:419.05px;font-size:11px;font-weight:normal;letter-spacing:0.000px;color:#000">25.1</div>
<div class="t" style="right:72px;top:420.01px;font-size:10.6px;font-weight:bold;letter-spacing:0.000px;color:#000">227.9</div>
<div class="t" style="right:824px;top:434.05px;font-size:11px;font-weight:normal;letter-spacing:0.000px;color:#000">1237</div>
<div class="t" style="right:448px;top:434.05px;font-size:11px;font-weight:normal;letter-spacing:0.000px;color:#000">1109</div>
<div class="t" style="right:260px;top:434.05px;font-size:11px;font-weight:normal;letter-spacing:0.000px;color:#000">1793</div>
<div class="t" style="right:824px;top:449.05px;font-size:11px;font-weight:normal;letter-spacing:0.000px;color:#000">6.99%</div>
<div class="t" style="right:448px;top:449.05px;font-size:11px;font-weight:normal;letter-spacing:0.000px;color:#000">7.44%</div>
<div class="t" style="right:260px;top:449.05px;font-size:11px;font-weight:normal;letter-spacing:0.000px;color:#000">6.52%</div>
<div class="t" style="right:824px;top:464.05px;font-size:11px;font-weight:normal;letter-spacing:0.000px;color:#000">86%</div>
<div class="t" style="right:448px;top:464.05px;font-size:11px;font-weight:normal;letter-spacing:0.000px;color:#000">83%</div>
<div class="t" style="right:260px;top:464.05px;font-size:11px;font-weight:normal;letter-spacing:0.000px;color:#000">74%</div>
<div class="t" style="right:824px;top:479.05px;font-size:11px;font-weight:normal;letter-spacing:0.000px;color:#000">250</div>
<div class="t" style="right:448px;top:479.05px;font-size:11px;font-weight:normal;letter-spacing:0.000px;color:#000">241</div>
<div class="t" style="right:260px;top:479.05px;font-size:11px;font-weight:normal;letter-spacing:0.000px;color:#000">215</div>
<div class="t" style="right:918px;top:494.05px;font-size:11px;font-weight:normal;letter-spacing:0.000px;color:#000">51.44</div>
<div class="t" style="right:824px;top:494.05px;font-size:11px;font-weight:normal;letter-spacing:0.000px;color:#000">14.33</div>
<div class="t" style="right:730px;top:494.05px;font-size:11px;font-weight:normal;letter-spacing:0.000px;color:#000">49.68</div>
<div class="t" style="right:636px;top:494.05px;font-size:11px;font-weight:normal;letter-spacing:0.000px;color:#000">30.20</div>
<div class="t" style="right:542px;top:494.05px;font-size:11px;font-weight:normal;letter-spacing:0.000px;color:#000">39.09</div>
<div class="t" style="right:448px;top:494.05px;font-size:11px;font-weight:normal;letter-spacing:0.000px;color:#000">13.19</div>
<div class="t" style="right:354px;top:494.05px;font-size:11px;font-weight:normal;letter-spacing:0.000px;color:#000">51.08</div>
<div class="t" style="right:260px;top:494.05px;font-size:11px;font-weight:normal;letter-spacing:0.000px;color:#000">13.22</div>
<div class="t" style="right:166px;top:494.05px;font-size:11px;font-weight:normal;letter-spacing:0.000px;color:#000">46.25</div>
<div class="t" style="right:72px;top:495.01px;font-size:10.6px;font-weight:bold;letter-spacing:0.000px;color:#000">27.12</div>
<div class="t" style="right:824px;top:509.05px;font-size:11px;font-weight:normal;letter-spacing:0.000px;color:#000">1001</div>
<div class="t" style="right:448px;top:509.05px;font-size:11px;font-weight:normal;letter-spacing:0.000px;color:#000">981</div>
<div class="t" style="right:260px;top:509.05px;font-size:11px;font-weight:normal;letter-spacing:0.000px;color:#000">862</div>
<div class="t" style="right:918px;top:524.04px;font-size:11px;font-weight:normal;letter-spacing:0.000px;color:#000">00:36:10</div>
<div class="t" style="right:824px;top:524.04px;font-size:11px;font-weight:normal;letter-spacing:0.000px;color:#000">01:14:07</div>
<div class="t" style="right:730px;top:524.04px;font-size:11px;font-weight:normal;letter-spacing:0.000px;color:#000">00:43:07</div>
<div class="t" style="right:636px;top:524.04px;font-size:11px;font-weight:normal;letter-spacing:0.000px;color:#000">01:11:19</div>
<div class="t" style="right:542px;top:524.04px;font-size:11px;font-weight:normal;letter-spacing:0.000px;color:#000">00:30:42</div>
<div class="t" style="right:448px;top:524.04px;font-size:11px;font-weight:normal;letter-spacing:0.000px;color:#000">01:07:48</div>
<div class="t" style="right:354px;top:524.04px;font-size:11px;font-weight:normal;letter-spacing:0.000px;color:#000">00:23:37</div>
<div class="t" style="right:260px;top:524.04px;font-size:11px;font-weight:normal;letter-spacing:0.000px;color:#000">02:04:50</div>
<div class="t" style="right:166px;top:524.04px;font-size:11px;font-weight:normal;letter-spacing:0.000px;color:#000">00:32:34</div>
<div class="t" style="right:72px;top:525.01px;font-size:10.6px;font-weight:bold;letter-spacing:0.000px;color:#000">08:24:13</div>
<div class="t" style="right:730px;top:539.04px;font-size:11px;font-weight:normal;letter-spacing:0.000px;color:#000">00:01:20</div>
<div class="t" style="right:542px;top:539.04px;font-size:11px;font-weight:normal;letter-spacing:0.000px;color:#000">00:02:00</div>
<div class="t" style="right:448px;top:539.04px;font-size:11px;font-weight:normal;letter-spacing:0.000px;color:#000">00:01:20</div>
<div class="t" style="right:260px;top:539.04px;font-size:11px;font-weight:normal;letter-spacing:0.000px;color:#000">00:01:20</div>
<div class="t" style="right:72px;top:540.01px;font-size:10.6px;font-weight:bold;letter-spacing:0.000px;color:#000">00:06:00</div>
<div class="t" style="right:918px;top:554.04px;font-size:11px;font-weight:normal;letter-spacing:0.000px;color:#000">0:36:10</div>
<div class="t" style="right:824px;top:554.04px;font-size:11px;font-weight:normal;letter-spacing:0.000px;color:#000">1:14:07</div>
<div class="t" style="right:730px;top:554.04px;font-size:11px;font-weight:normal;letter-spacing:0.000px;color:#000">0:44:27</div>
<div class="t" style="right:636px;top:554.04px;font-size:11px;font-weight:normal;letter-spacing:0.000px;color:#000">1:11:19</div>
<div class="t" style="right:542px;top:554.04px;font-size:11px;font-weight:normal;letter-spacing:0.000px;color:#000">0:32:42</div>
<div class="t" style="right:448px;top:554.04px;font-size:11px;font-weight:normal;letter-spacing:0.000px;color:#000">1:09:08</div>
<div class="t" style="right:354px;top:554.04px;font-size:11px;font-weight:normal;letter-spacing:0.000px;color:#000">0:23:37</div>
<div class="t" style="right:260px;top:554.04px;font-size:11px;font-weight:normal;letter-spacing:0.000px;color:#000">2:06:10</div>
<div class="t" style="right:166px;top:554.04px;font-size:11px;font-weight:normal;letter-spacing:0.000px;color:#000">0:32:34</div>
<div class="t" style="right:72px;top:555.01px;font-size:10.6px;font-weight:bold;letter-spacing:0.000px;color:#000">08:30:13</div>
<div class="t" style="right:918px;top:569.04px;font-size:11px;font-weight:normal;letter-spacing:0.000px;color:#000">0:36:10</div>
<div class="t" style="right:824px;top:569.04px;font-size:11px;font-weight:normal;letter-spacing:0.000px;color:#000">1:50:17</div>
<div class="t" style="right:730px;top:569.04px;font-size:11px;font-weight:normal;letter-spacing:0.000px;color:#000">2:34:44</div>
<div class="t" style="right:636px;top:569.04px;font-size:11px;font-weight:normal;letter-spacing:0.000px;color:#000">3:46:03</div>
<div class="t" style="right:542px;top:569.04px;font-size:11px;font-weight:normal;letter-spacing:0.000px;color:#000">4:18:45</div>
<div class="t" style="right:448px;top:569.04px;font-size:11px;font-weight:normal;letter-spacing:0.000px;color:#000">5:27:53</div>
<div class="t" style="right:354px;top:569.04px;font-size:11px;font-weight:normal;letter-spacing:0.000px;color:#000">5:51:30</div>
<div class="t" style="right:260px;top:569.04px;font-size:11px;font-weight:normal;letter-spacing:0.000px;color:#000">7:57:40</div>
<div class="t" style="right:166px;top:569.04px;font-size:11px;font-weight:normal;letter-spacing:0.000px;color:#000">8:30:13</div>
<div class="t" style="right:72px;top:570.01px;font-size:10.6px;font-weight:bold;letter-spacing:0.000px;color:#000">08:30:13</div>
<div class="t" style="right:918px;top:614.04px;font-size:11px;font-weight:normal;letter-spacing:0.000px;color:#000">07:06:10</div>
<div class="t" style="right:824px;top:614.04px;font-size:11px;font-weight:normal;letter-spacing:0.000px;color:#000">8:20:17</div>
<div class="t" style="right:730px;top:614.04px;font-size:11px;font-weight:normal;letter-spacing:0.000px;color:#000">9:04:44</div>
<div class="t" style="right:636px;top:614.04px;font-size:11px;font-weight:normal;letter-spacing:0.000px;color:#000">10:16:03</div>
<div class="t" style="right:542px;top:614.04px;font-size:11px;font-weight:normal;letter-spacing:0.000px;color:#000">10:48:45</div>
<div class="t" style="right:448px;top:614.04px;font-size:11px;font-weight:normal;letter-spacing:0.000px;color:#000">11:57:53</div>
<div class="t" style="right:354px;top:614.04px;font-size:11px;font-weight:normal;letter-spacing:0.000px;color:#000">12:21:30</div>
<div class="t" style="right:260px;top:614.04px;font-size:11px;font-weight:normal;letter-spacing:0.000px;color:#000">14:27:40</div>
<div class="t" style="right:166px;top:614.04px;font-size:11px;font-weight:normal;letter-spacing:0.000px;color:#000">15:00:13</div>
<div class="t" style="right:918px;top:599.04px;font-size:11px;font-weight:normal;letter-spacing:0.000px;color:#000">06:30:00</div>
<div class="t" style="right:918px;top:719.04px;font-size:11px;font-weight:normal;letter-spacing:0.000px;color:#000">11.05.2023</div>
<div class="t" style="left:315px;top:719.04px;font-size:11px;font-weight:normal;letter-spacing:0.517px;color:#000">Version 2023 mit Anpassung an Strecke</div>
<svg class="r" style="left:0;top:0" width="1228" height="761"><rect x="26" y="282" width="287" height="1" fill="#000"/><rect x="26" y="372" width="287" height="1" fill="#000"/><rect x="312" y="268" width="1" height="105" fill="#000"/><rect x="26" y="402" width="1133" height="1" fill="#000"/><rect x="26" y="522" width="1133" height="1" fill="#000"/><rect x="26" y="582" width="1133" height="1" fill="#000"/><rect x="312" y="402" width="1" height="181" fill="#000"/><rect x="406" y="402" width="1" height="181" fill="#000"/><rect x="500" y="402" width="1" height="181" fill="#000"/><rect x="594" y="402" width="1" height="181" fill="#000"/><rect x="688" y="402" width="1" height="181" fill="#000"/><rect x="782" y="402" width="1" height="181" fill="#000"/><rect x="876" y="402" width="1" height="181" fill="#000"/><rect x="970" y="402" width="1" height="181" fill="#000"/><rect x="1064" y="402" width="1" height="181" fill="#000"/><rect x="1158" y="402" width="1" height="181" fill="#000"/></svg>
<div class="r" style="left:218px;top:254px;width:1px;height:507px;background:#a6a6a6;"></div>
<div class="r" style="left:0px;top:417px;width:1228px;height:1px;background:#a6a6a6;"></div>
<svg class="r" style="left:313px;top:493px;" width="6" height="6" viewBox="0 0 6 6"><path d="M0 0 H5 L0 5 Z" fill="#008000"/></svg>
<svg class="r" style="left:689px;top:493px;" width="6" height="6" viewBox="0 0 6 6"><path d="M0 0 H5 L0 5 Z" fill="#008000"/></svg>
<svg class="r" style="left:877px;top:493px;" width="6" height="6" viewBox="0 0 6 6"><path d="M0 0 H5 L0 5 Z" fill="#008000"/></svg>
<svg class="r" style="left:783px;top:523px;" width="6" height="6" viewBox="0 0 6 6"><path d="M0 0 H5 L0 5 Z" fill="#008000"/></svg>
<svg class="r" style="left:683px;top:403px;" width="6" height="6" viewBox="0 0 6 6"><path d="M0 0 H5 V5 Z" fill="#ff0000"/></svg>
<svg class="r" style="left:871px;top:403px;" width="6" height="6" viewBox="0 0 6 6"><path d="M0 0 H5 V5 Z" fill="#ff0000"/></svg>
<svg class="r" style="left:965px;top:403px;" width="6" height="6" viewBox="0 0 6 6"><path d="M0 0 H5 V5 Z" fill="#ff0000"/></svg>
<div class="r" style="left:405px;top:506px;width:97px;height:18px;border:2px solid #107c41"></div>
<div class="r" style="left:497px;top:519px;width:7px;height:7px;background:#ffffff;"></div>
<div class="r" style="left:498px;top:520px;width:5px;height:5px;background:#107c41;"></div>
<svg class="r" style="left:0;top:0" width="1228" height="761"><path d="M677.5 362.5 L688.5 402.5" stroke="#000" stroke-width="1"/><circle cx="688.5" cy="402.5" r="1.4" fill="#000"/></svg>
<div class="r cm" style="left:596px;top:301px;width:82px;height:62px"><div style="position:relative;top:-1px"><b>kapi:</b><br>Sterzing<br>Umfahrung neu<br><span style="letter-spacing:-0.3px">+115hm, +0,9km</span></div></div>
<svg class="r" style="left:0;top:0" width="1228" height="761"><path d="M886.5 355.5 L876.5 402.5" stroke="#000" stroke-width="1"/><circle cx="876.5" cy="402.5" r="1.4" fill="#000"/></svg>
<div class="r cm" style="left:770px;top:303px;width:117px;height:53px"><div style="position:relative;top:-1px"><b>kapi:</b><br>bis Kreisverkehr<br>Ortsende<br>(Matte schon davor)</div></div>
<svg class="r" style="left:0;top:0" width="1228" height="761"><path d="M1003.5 320.5 L970.5 402.5" stroke="#000" stroke-width="1"/><circle cx="970.5" cy="402.5" r="1.4" fill="#000"/></svg>
<div class="r cm" style="left:894px;top:271px;width:110px;height:50px"><div style="position:relative;top:-1px"><b>kapi:</b><br>Anstieg ab<br>Kreisverkehr<br>(Matte schon davor)</div></div>
</body></html>
